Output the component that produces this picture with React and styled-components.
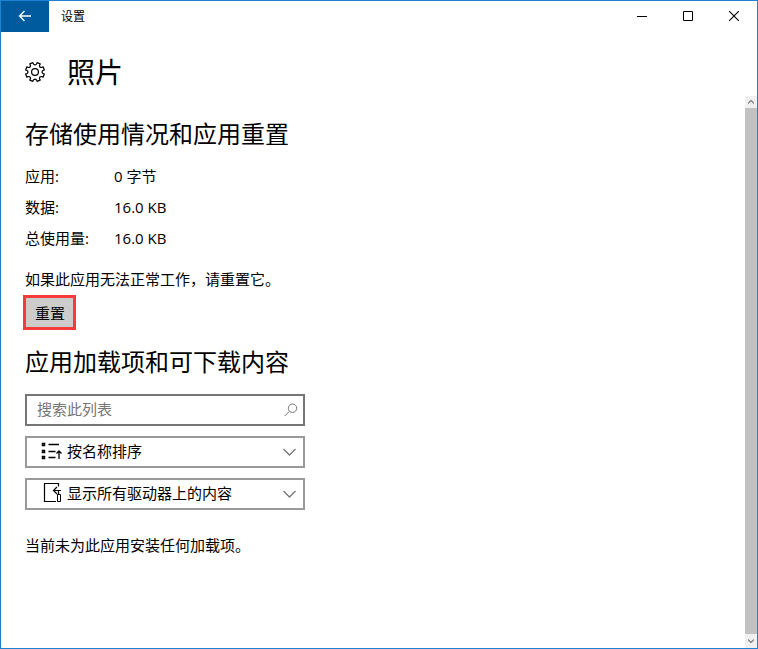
import { useState } from "react";
import styled, { createGlobalStyle } from "styled-components";

const usage = [
  { label: "应用:", value: "0 字节" },
  { label: "数据:", value: "16.0 KB" },
  { label: "总使用量:", value: "16.0 KB" },
];

const sortOptions = ["按名称排序", "按大小排序"];
const driveOptions = ["显示所有驱动器上的内容", "仅显示此驱动器上的内容"];

const polar = (degrees, radius) => {
  const angle = (degrees * Math.PI) / 180;
  const x = (10 + radius * Math.cos(angle)).toFixed(2);
  const y = (10 + radius * Math.sin(angle)).toFixed(2);
  return `${x} ${y}`;
};

// eight teeth with a rounded valley after each one
const gearPath = `${Array.from({ length: 8 }, (_, i) => {
  const tooth = i * 45 + 22.5;
  return [
    `${i === 0 ? "M" : "L"}${polar(tooth - 10, 9.6)}`,
    `L${polar(tooth + 10, 9.6)}`,
    `L${polar(tooth + 12, 8)}`,
    `Q${polar(tooth + 22.5, 6.2)} ${polar(tooth + 33, 8)}`,
  ].join("");
}).join("")}Z`;

function App() {
  const [query, setQuery] = useState("");
  const [sort, setSort] = useState(sortOptions[0]);
  const [drive, setDrive] = useState(driveOptions[0]);

  return (
    <Window>
      <GlobalStyle />
      <TitleBar>
        <BackButton aria-label="返回">
          <Icon width="14" height="12" viewBox="0 0 14 12" strokeWidth="1.3">
            <path d="M13 6H1.5M6.5 1L1.5 6L6.5 11" />
          </Icon>
        </BackButton>
        <WindowTitle>设置</WindowTitle>
        <WindowButton aria-label="最小化">
          <Icon width="10" height="10" viewBox="0 0 10 10">
            <path d="M0 5.5H10" />
          </Icon>
        </WindowButton>
        <WindowButton aria-label="最大化">
          <Icon width="10" height="10" viewBox="0 0 10 10">
            <path d="M0.5 0.5H9.5V9.5H0.5Z" />
          </Icon>
        </WindowButton>
        <WindowButton aria-label="关闭">
          <Icon width="10" height="10" viewBox="0 0 10 10" strokeWidth="1.1">
            <path d="M0 0L10 10M10 0L0 10" />
          </Icon>
        </WindowButton>
      </TitleBar>
      <Header>
        <Icon width="20" height="20" viewBox="0 0 20 20" strokeWidth="1.2">
          <path d={gearPath} strokeLinejoin="round" />
          <circle cx="10" cy="10" r="3.4" />
        </Icon>
        <Title>照片</Title>
      </Header>
      <Body>
        <Content>
          <Heading>存储使用情况和应用重置</Heading>
          <Usage>
            {usage.map(({ label, value }) => (
              <UsageRow key={label}>
                <dt>{label}</dt>
                <dd>{value}</dd>
              </UsageRow>
            ))}
          </Usage>
          <Text>如果此应用无法正常工作，请重置它。</Text>
          <ResetButton>重置</ResetButton>
          <Heading>应用加载项和可下载内容</Heading>
          <Fields>
            <Field>
              <SearchInput
                type="search"
                aria-label="搜索此列表"
                placeholder="搜索此列表"
                value={query}
                onChange={(e) => setQuery(e.target.value)}
              />
              <SearchIcon width="14" height="14" viewBox="0 0 14 14">
                <circle cx="8.5" cy="5.2" r="4.2" />
                <path d="M5.5 8.2L0.8 13" />
              </SearchIcon>
            </Field>
            <Field>
              <StartIcon width="20" height="18" viewBox="0 0 20 18">
                <path
                  d="M1.5 0.5h2v2h-2zM1.5 7.5h2v2h-2zM1.5 13.5h2v2h-2z"
                  strokeWidth="1.5"
                />
                <path
                  d="M7.5 1.5H18M7.5 8.5H14.5M7.5 14.5H14.5M18 16V8M15.5 10.5L18 8L20.5 10.5"
                  strokeWidth="1.3"
                />
              </StartIcon>
              <Select
                aria-label="排序"
                value={sort}
                onChange={(e) => setSort(e.target.value)}
              >
                {sortOptions.map((option) => (
                  <option key={option}>{option}</option>
                ))}
              </Select>
              <Chevron width="14" height="14" viewBox="0 0 14 14">
                <path d="M0.5 4L6.5 10L12.5 4" />
              </Chevron>
            </Field>
            <Field>
              <StartIcon width="20" height="20" viewBox="0 0 20 20">
                <path
                  d="M15 17.5H3.5V-0.5H17.5V2.5M20 6.5H12.5M16 3L12.5 6.5L16 10M17.5 6.5V10"
                  strokeWidth="1.2"
                />
                <path d="M16.5 10.5h3v7h-3z" />
              </StartIcon>
              <Select
                aria-label="驱动器"
                value={drive}
                onChange={(e) => setDrive(e.target.value)}
              >
                {driveOptions.map((option) => (
                  <option key={option}>{option}</option>
                ))}
              </Select>
              <Chevron width="14" height="14" viewBox="0 0 14 14">
                <path d="M0.5 4L6.5 10L12.5 4" />
              </Chevron>
            </Field>
          </Fields>
          <Text>当前未为此应用安装任何加载项。</Text>
        </Content>
        <ScrollBar>
          <ScrollButton aria-label="向上滚动" $size={12}>
            <Icon width="6" height="4" viewBox="0 0 6 4" strokeWidth="1.4">
              <path d="M0 3.5L3 0.5L6 3.5" />
            </Icon>
          </ScrollButton>
          <Thumb />
          <ScrollButton aria-label="向下滚动" $size={14}>
            <Icon width="6" height="4" viewBox="0 0 6 4" strokeWidth="1.4">
              <path d="M0 0.5L3 3.5L6 0.5" />
            </Icon>
          </ScrollButton>
        </ScrollBar>
      </Body>
    </Window>
  );
}

const GlobalStyle = createGlobalStyle`
  * {
    box-sizing: border-box;
  }

  body {
    margin: 0;
  }

  body, button, input, select {
    font-family: "Open Sans", "Noto Sans CJK SC", sans-serif;
    font-size: 15px;
    color: #000;
  }
`;

const Window = styled.main`
  display: flex;
  flex-direction: column;
  min-height: 100vh;
  background: #fff;
  border: 1px solid #1e82d4;
`;

const Icon = styled.svg`
  flex: none;
  fill: none;
  stroke: currentColor;
`;

const TitleBar = styled.header`
  display: flex;
  height: 31px;
`;

const BackButton = styled.button`
  display: flex;
  align-items: center;
  justify-content: center;
  width: 48px;
  padding: 0 0 1px;
  border: none;
  background: #005a9e;
  color: #fff;
`;

const WindowTitle = styled.span`
  flex: 1;
  padding-left: 12px;
  font-size: 12px;
  line-height: 31px;
`;

const WindowButton = styled.button`
  display: flex;
  align-items: center;
  justify-content: center;
  width: 46px;
  padding: 0 0 1px;
  border: none;
  background: none;
`;

const Header = styled.div`
  display: flex;
  align-items: center;
  gap: 22px;
  height: 64px;
  padding: 15px 24px 0;
`;

const Title = styled.h1`
  margin: 0;
  font-size: 28px;
  font-weight: 400;
  line-height: 40px;
`;

const Body = styled.div`
  display: flex;
  flex: 1;
`;

const Content = styled.div`
  flex: 1;
  padding: 22px 24px;
`;

const Heading = styled.h2`
  margin: 0;
  font-size: 24px;
  font-weight: 400;
  line-height: 32px;
`;

const Usage = styled.dl`
  margin: 11px 0 15px;
`;

const UsageRow = styled.div`
  display: grid;
  grid-template-columns: 89px 1fr;
  line-height: 31px;

  dd {
    margin: 0;
  }
`;

const Text = styled.p`
  margin: 0;
  line-height: 20px;
`;

const ResetButton = styled.button`
  display: block;
  height: 31px;
  margin: 8px 0 18px;
  padding: 0 9px 0 10px;
  border: none;
  background: #ccc;
  outline: 3px solid #f93a3a;
  outline-offset: -1px;
`;

const Fields = styled.div`
  display: flex;
  flex-direction: column;
  gap: 10px;
  max-width: 280px;
  margin: 16px 0 25px;
`;

const Field = styled.div`
  position: relative;
`;

const SearchInput = styled.input`
  display: block;
  width: 100%;
  height: 32px;
  padding: 0 32px 2px 10px;
  border: 2px solid #767676;
  border-radius: 0;
  background: #fff;
  appearance: none;

  &::placeholder {
    color: #767676;
  }
`;

const Select = styled.select`
  display: block;
  width: 100%;
  height: 32px;
  padding: 0 32px 2px 40px;
  border: 2px solid #999;
  border-radius: 0;
  background: #fff;
  appearance: none;
`;

const StartIcon = styled(Icon)`
  position: absolute;
  top: 50%;
  left: 16px;
  overflow: visible;
  transform: translateY(-50%);
  pointer-events: none;
`;

const SearchIcon = styled(Icon)`
  position: absolute;
  top: 9px;
  right: 7px;
  color: #767676;
  pointer-events: none;
`;

const Chevron = styled(SearchIcon)`
  right: 8px;
  stroke-width: 1.3;
`;

const ScrollBar = styled.div`
  display: flex;
  flex-direction: column;
  width: 12px;
  background: #f0f0f0;
`;

const ScrollButton = styled.button`
  display: flex;
  align-items: center;
  justify-content: center;
  height: ${({ $size }) => $size}px;
  padding: 0;
  border: none;
  background: #f0f0f0;
  color: #888;
`;

const Thumb = styled.div`
  flex: 1;
  background: #c2c2c2;
`;

export default App;
